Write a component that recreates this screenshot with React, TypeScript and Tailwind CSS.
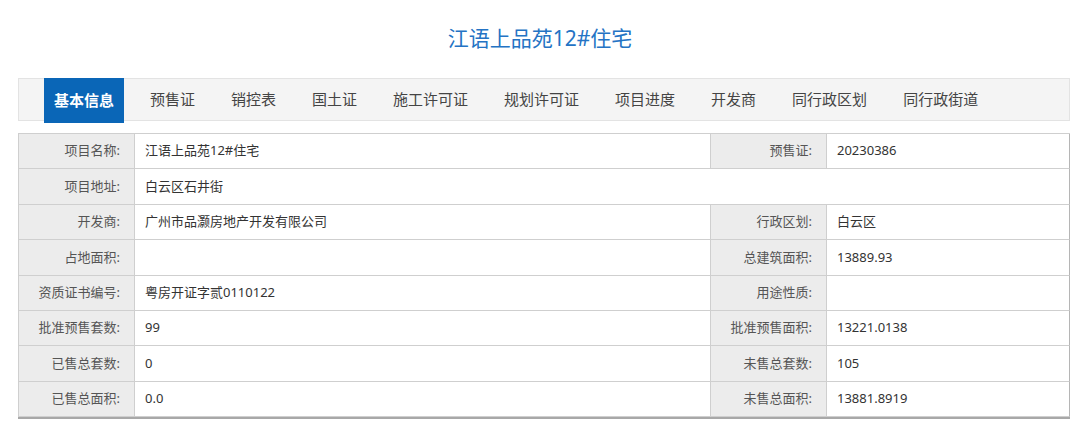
const FONT = "font-['Noto_Sans','Noto_Sans_CJK_SC',sans-serif]";

const TABS = [
  "基本信息",
  "预售证",
  "销控表",
  "国土证",
  "施工许可证",
  "规划许可证",
  "项目进度",
  "开发商",
  "同行政区划",
  "同行政街道",
];

type Row =
  | { label: string; value: string; label2: string; value2: string }
  | { label: string; value: string; wide: true };

const ROWS: Row[] = [
  { label: "项目名称:", value: "江语上品苑12#住宅", label2: "预售证:", value2: "20230386" },
  { label: "项目地址:", value: "白云区石井街", wide: true },
  { label: "开发商:", value: "广州市品灏房地产开发有限公司", label2: "行政区划:", value2: "白云区" },
  { label: "占地面积:", value: "", label2: "总建筑面积:", value2: "13889.93" },
  { label: "资质证书编号:", value: "粤房开证字贰0110122", label2: "用途性质:", value2: "" },
  { label: "批准预售套数:", value: "99", label2: "批准预售面积:", value2: "13221.0138" },
  { label: "已售总套数:", value: "0", label2: "未售总套数:", value2: "105" },
  { label: "已售总面积:", value: "0.0", label2: "未售总面积:", value2: "13881.8919" },
];

const labelCell =
  "flex h-[35.4px] items-center justify-end border-r border-b border-[#cfcfcf] bg-[#ececec] pr-[14px] text-[13px] text-[#555]";
const valueCell =
  "flex h-[35.4px] items-center border-r border-b border-[#cfcfcf] bg-white pl-[10px] text-[13px] text-[#333]";

export default function App() {
  return (
    <div className={`h-[421px] w-[1080px] bg-white ${FONT}`}>
      <h1 className="pt-[24px] text-center text-[21px] leading-[28px] text-[#2473c4]">
        江语上品苑12#住宅
      </h1>

      <div className="ml-[18px] mt-[26px] w-[1052px]">
        {/* TABS */}
        <div className="flex h-[43px] items-stretch border border-[#e3e3e3] bg-[#f4f4f4] pl-[25px]">
          {TABS.map((t, i) =>
            i === 0 ? (
              <div
                key={t}
                className="-mt-px mr-[8px] flex h-[45px] w-[80px] items-center justify-center bg-[#0a66b7] text-[15px] font-bold text-white"
              >
                {t}
              </div>
            ) : (
              <div
                key={t}
                className="flex items-center px-[18px] text-[15px] text-[#444]"
              >
                {t}
              </div>
            )
          )}
        </div>

        {/* INFO TABLE */}
        <div className="mt-[12px] grid grid-cols-[116px_576px_116px_1fr] border-l border-t border-[#cfcfcf] shadow-[0_2px_0_#a8a8a8]">
          {ROWS.map((r) =>
            "wide" in r ? (
              <div key={r.label} className="contents">
                <div className={labelCell}>{r.label}</div>
                <div className={`${valueCell} col-span-3 border-r-[#b5b5b5]`}>{r.value}</div>
              </div>
            ) : (
              <div key={r.label} className="contents">
                <div className={labelCell}>{r.label}</div>
                <div className={valueCell}>{r.value}</div>
                <div className={labelCell}>{r.label2}</div>
                <div className={`${valueCell} border-r-[#b5b5b5]`}>{r.value2}</div>
              </div>
            )
          )}
        </div>
      </div>
    </div>
  );
}
